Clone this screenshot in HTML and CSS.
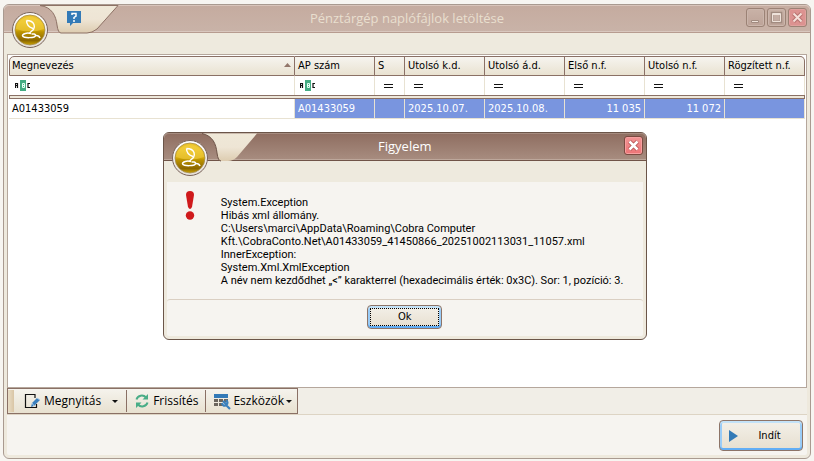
FILE: index.html
```html
<!DOCTYPE html>
<html lang="hu">
<head>
<meta charset="utf-8">
<title>Pénztárgép naplófájlok letöltése</title>
<link rel="stylesheet" href="styles.css">
</head>
<body>
<svg class="defs" aria-hidden="true">
  <defs>
    <linearGradient id="gold" x2="0" y2="1"><stop offset="0" stop-color="#edc52d"/><stop offset=".25" stop-color="#e8c020"/><stop offset=".5" stop-color="#d5a90a"/><stop offset=".56" stop-color="#bd9400"/><stop offset=".85" stop-color="#8c6700"/><stop offset="1" stop-color="#cda500"/></linearGradient>
    <linearGradient id="cream" x2="0" y2="1"><stop offset="0" stop-color="#efe8d8"/><stop offset=".5" stop-color="#eee5d5"/><stop offset="1" stop-color="#ddccb0"/></linearGradient>
    <linearGradient id="rim" x2="0" y2="1"><stop offset="0" stop-color="#fff"/><stop offset="1" stop-color="#e5dfd8"/></linearGradient>
    <symbol id="badge" viewBox="0 0 38 38">
      <circle cx="19" cy="19" r="17.500" fill="url(#rim)" stroke="#796359"/>
      <circle cx="19" cy="19" r="15" fill="url(#gold)" stroke="#a58d50" stroke-width=".8"/>
      <path d="M5 18a14 12 0 0 1 28 0q-14 5-28 0" fill="#f5d34c" opacity=".5"/>
      <path d="M15.500 9.500q6 0 7.500 4 1 3-.5 5L18.500 22M15.500 9.500q0 6 6.500 8" fill="none" stroke="#fff" stroke-width="1.400"/>
      <path d="M20 22.500c-4-1-8.500 0-8.500 2.200 0 2.600 13 2.600 13-.2 0-1.500-2-1.800-4-1.500M24 24.500q4-.5 5 2.500" fill="none" stroke="#fff" stroke-width="1.500"/>
    </symbol>
    <symbol id="abc" viewBox="0 0 16 11">
      <path d="M5 0h6v11H5z" fill="#44ab82"/>
      <path d="M.5 8V3.500h2V8M.5 5.500h2M15 3.500h-2v4h2" fill="none" stroke="#111" stroke-width="1.200"/>
      <path d="M7.500 3.500h2v4h-2zM7.500 5.500h2" fill="none" stroke="#e4fff3"/>
    </symbol>
  </defs>
</svg>
<main class="window">
  <header class="titlebar">
    <svg class="tab" width="118" height="29" viewBox="0 0 118 29" aria-hidden="true"><path d="M36 .5C48 2 52 11 53 20q1 8 4 8h26q5 0 10-4L114 .5z" fill="url(#cream)" stroke="#8d7165"/></svg>
    <svg class="badge" width="38" height="38" aria-hidden="true"><use href="#badge"/></svg>
    <button class="help" aria-label="Súgó"><svg width="14" height="15" viewBox="0 0 14 15"><path d="M0 0h14v12H6l-3 3v-3H0z" fill="#337ab7"/><path d="M5 4V2.500h4V5L7 6.500V8M7 9v2" fill="none" stroke="#fff" stroke-width="1.5"/></svg></button>
    <h1>Pénztárgép naplófájlok letöltése</h1>
    <div class="controls">
      <button aria-label="Kis méret"><svg width="17" height="17" viewBox="0 0 17 17"><path d="M4.500 11.500h7v2h-7z" fill="#eee2da" stroke="#a18b80"/></svg></button>
      <button aria-label="Teljes méret"><svg width="17" height="17" viewBox="0 0 17 17"><path d="M4 4h9v9H4z" fill="#c5aea4" stroke="#a18b80" stroke-width="2.500"/><path d="M4.500 4.500h8v8h-8zM4 5.500h9" fill="none" stroke="#eee2da"/></svg></button>
      <button class="close" aria-label="Bezárás"><svg width="17" height="17" viewBox="0 0 17 17"><path d="M4.500 4.500l8 8m0-8l-8 8" stroke="#b87370" stroke-width="4"/><path d="M4.500 4.500l8 8m0-8l-8 8" stroke="#f5dfd9" stroke-width="2"/></svg></button>
    </div>
  </header>
  <div class="band"></div>
  <section class="grid">
    <table>
      <colgroup><col><col class="mid"><col class="small"><col class="mid"><col class="mid"><col class="mid"><col class="mid"><col class="mid"></colgroup>
      <thead>
        <tr><th><span class="sorted">Megnevezés <svg width="7" height="4" viewBox="0 0 7 4" aria-hidden="true"><path d="M0 4l3.500-4L7 4z" fill="#92766a"/></svg></span></th><th>AP szám</th><th>S</th><th>Utolsó k.d.</th><th>Utolsó á.d.</th><th>Első n.f.</th><th>Utolsó n.f.</th><th>Rögzített n.f.</th></tr>
        <tr class="filter"><td><svg width="16" height="11" aria-label="ABC"><use href="#abc"/></svg></td><td><svg width="16" height="11" aria-label="ABC"><use href="#abc"/></svg></td><td><i class="equals"></i></td><td><i class="equals"></i></td><td><i class="equals"></i></td><td><i class="equals"></i></td><td><i class="equals"></i></td><td><i class="equals"></i></td></tr>
        <tr class="divider"><td colspan="8"></td></tr>
      </thead>
      <tbody>
        <tr><td>A01433059</td><td>A01433059</td><td></td><td>2025.10.07.</td><td>2025.10.08.</td><td class="number">11 035</td><td class="number">11 072</td><td></td></tr>
      </tbody>
    </table>
  </section>
  <div class="toolrow">
    <div class="toolbar">
      <span class="grip"></span>
      <button class="open"><svg width="16" height="16" viewBox="0 0 16 16"><path d="M11 5V1.500H1.500v13h11V11" fill="none" stroke="#111" stroke-width="1.2"/><path d="M13 5l3 2-6 6-3 1 1-4z" fill="#3a7fbd"/><path d="M13 5l3 2M8 10l2 3" stroke="#a9cbe8"/></svg><span>Megnyitás</span><i class="arrow"></i></button>
      <button class="refresh"><svg width="14" height="14" viewBox="0 0 14 14"><path d="M1.500 5.500A5.500 5.500 0 0 1 11 3.500M12.500 8.500A5.500 5.500 0 0 1 3 10.500" fill="none" stroke="#49ad87" stroke-width="2"/><path d="M13 0v5.500H7.500zM1 14V8.500h5.500z" fill="#49ad87"/></svg><span>Frissítés</span></button>
      <button class="tools"><svg width="17" height="17" viewBox="0 0 17 17"><path d="M0 1h14v4H0z" fill="#337ab7"/><path d="M0 6h4v3H0zM5 6h4v3H5zM0 10h4v3H0zM5 10h4v3H5zM10 6h4v3h-4z" fill="#6b655d"/><path d="M9 8l3 3m-4-1q1 4 4 2 3-2 0-5M12 12l4 4" fill="none" stroke="#3b81bd" stroke-width="2.200"/></svg><span>Eszközök</span><i class="arrow"></i></button>
    </div>
  </div>
  <footer>
    <button class="action start"><svg width="9" height="12" viewBox="0 0 9 12" aria-hidden="true"><path d="M0 0l9 6-9 6z" fill="#337ab7"/></svg><span>Indít</span></button>
  </footer>
</main>
<dialog open aria-labelledby="notice">
  <header class="titlebar">
    <svg class="tab" width="118" height="29" viewBox="0 0 118 29" aria-hidden="true"><path d="M38 .5C49 3 52 11 53 20q1 8 4 8h7q5 0 9-4L93 .5z" fill="url(#cream)"/><path d="M38 .5C49 3 52 11 53 20q1 8 4 8" fill="none" stroke="#6c5247"/></svg>
    <svg class="badge" width="38" height="38" aria-hidden="true"><use href="#badge"/></svg>
    <h2 id="notice">Figyelem</h2>
    <div class="controls"><button class="close" aria-label="Bezárás"><svg width="17" height="17" viewBox="0 0 17 17"><path d="M4.500 4.500l8 8m0-8l-8 8" stroke="#ad4d4b" stroke-width="4"/><path d="M4.500 4.500l8 8m0-8l-8 8" stroke="#fff" stroke-width="2.500"/></svg></button></div>
  </header>
  <div class="band"></div>
  <div class="message">
    <svg width="10" height="29" viewBox="0 0 10 29" aria-hidden="true"><path d="M1 4q0-4 4-4t4 4L7 16q-2 4-4 0z" fill="#cf1a1c"/><circle cx="5" cy="24.500" r="4.200" fill="#cf1a1c"/></svg>
    <p>System.Exception<br>Hibás xml állomány.<br>C:\Users\marci\AppData\Roaming\Cobra Computer<br>Kft.\CobraConto.Net\A01433059_41450866_20251002113031_11057.xml<br>InnerException:<br>System.Xml.XmlException<br>A név nem kezdődhet „&lt;” karakterrel (hexadecimális érték: 0x3C). Sor: 1, pozíció: 3.</p>
  </div>
  <div class="answers"><button class="action ok"><span>Ok</span></button></div>
</dialog>
</body>
</html>
```
FILE: styles.css
```css
* { box-sizing: border-box; }
body {
  margin: 0;
  min-height: 100vh;
  padding: 4px 3px 2px;
  display: flex;
  background: #f7f5f1;
  color: #000;
  font: 11px/13px "DejaVu Sans Condensed", "Noto Sans", sans-serif;
}
button { font: inherit; color: inherit; margin: 0; padding: 0; border: 0; background: none; }
svg { display: block; flex: none; }
.defs { position: absolute; width: 0; height: 0; }
.window {
  flex: 1;
  display: flex;
  flex-direction: column;
  border: 1px solid #a99a90;
  border-radius: 6px;
  background: #f6f4f0;
  box-shadow: inset 0 0 0 3px #eee9dd;
}
.titlebar {
  position: relative;
  height: 28px;
  display: flex;
  align-items: center;
  justify-content: center;
  border-bottom: 1px solid #b79c90;
  border-radius: 5px 5px 0 0;
  background: linear-gradient(#c5ab9f, #c9b3a8);
  box-shadow: inset 0 1px #d9c5bb, inset 0 -1px #d9c8bf;
}
.tab { position: absolute; left: 0; top: 0; }
.badge { position: absolute; left: 7px; top: 6px; }
.help { position: absolute; left: 63px; top: 6px; }
h1, h2 { margin: 0 0 2px; font: 13px/18px "Open Sans", sans-serif; color: #e9dfcf; }
.controls { position: absolute; right: 3px; top: 3px; display: flex; gap: 2px; }
.controls button {
  width: 19px;
  height: 19px;
  border: 1px solid #9b8275;
  border-radius: 3px;
  background: linear-gradient(#c9b2a7, #bda398);
  box-shadow: inset 0 0 0 1px #cbb6ac;
}
.controls .close { background: #dc9290; box-shadow: inset 0 0 0 1px #e0a19e; }
.band { height: 21px; background: #eeeade; }
.grid {
  flex: 1;
  margin: 0 3px;
  padding: 1px;
  border: 1px solid #b5a79c;
  background: #fff;
}
table { width: 100%; table-layout: fixed; border-collapse: separate; border-spacing: 0; }
.mid { width: 80px; }
.small { width: 30px; }
th, td { padding: 0 3px; text-align: left; font-weight: normal; white-space: nowrap; }
th {
  height: 20px;
  padding: 0 3px 2px;
  border: solid #8a7065;
  border-width: 1px 1px 1px 0;
  background: linear-gradient(#f6f4ef, #e9e2d1);
}
th:first-child { padding-left: 2px; border-left-width: 1px; border-top-left-radius: 5px; }
th:last-child { border-top-right-radius: 5px; }
.sorted { display: flex; align-items: center; justify-content: space-between; }
.filter td { height: 19px; padding: 0 6px; border-right: 1px solid #e8e2d2; }
.filter td + td { padding-left: 5px; }
.filter td + td + td { padding-left: 9px; }
.equals { display: block; width: 9px; height: 4px; border: solid #111; border-width: 1px 0; }
.divider td { height: 4px; padding: 0; border: 1px solid #8a7065; background: #eee8db; line-height: 0; }
tbody td { height: 20px; border-right: 1px solid #e8e2d2; border-bottom: 1px solid #e8e2d2; }
tbody td + td { background: #7995df; color: #fff; }
tbody .number { text-align: right; }
.toolrow {
  display: flex;
  margin: 0 3px;
  border-bottom: 1px solid #ddd4c4;
  background: #f1eee7;
}
.toolbar {
  height: 26px;
  display: flex;
  padding: 1px 0;
  border: 1px solid #8a7065;
  background: linear-gradient(#f5f3ed, #e8e1d0);
  font: 12px/16px "Open Sans", sans-serif;
}
.grip { width: 6px; background: linear-gradient(90deg, #e9ddc6, #d9c5a5); }
.toolbar button { display: flex; align-items: center; padding: 0 8px; gap: 4px; border-right: 1px solid #8a7065; }
.toolbar .open { padding-left: 10px; }
.toolbar .open .arrow { margin-left: 7px; }
.toolbar .refresh { padding-right: 7px; }
.toolbar .tools { border: 0; padding-right: 5px; gap: 2px; }
.arrow { border: solid transparent; border-top-color: #111; border-width: 3px 3px 0; }
footer { display: flex; justify-content: flex-end; padding: 5px 7px 7px; }
.action {
  display: flex;
  align-items: center;
  justify-content: center;
  border: 1px solid #8d7468;
  border-radius: 4px;
  background: linear-gradient(#f3f0e9, #e7dfcf);
  box-shadow: inset 0 -2px #62aef5, inset 0 2px #c3e2f8, inset 0 0 0 2px #9accf7;
}
.start { width: 84px; height: 31px; gap: 20px; padding-right: 12px; }
dialog {
  position: absolute;
  left: 20%;
  right: auto;
  top: 132px;
  width: 484px;
  margin: 0;
  padding: 0;
  color: #000;
  border: 1px solid #6b5549;
  border-radius: 6px;
  background: #f6f4f0;
  box-shadow: inset 0 0 0 3px #eee9dd;
}
dialog .titlebar {
  border-color: #705448;
  background: linear-gradient(#8e6d60, #a88d80);
  box-shadow: inset 0 1px #a58b7f, inset 0 -1px #bda79b;
}
dialog h2 { color: #fff; }
dialog .controls .close { border-color: #7b4a41; background: linear-gradient(#f19494, #ed7476); box-shadow: inset 0 0 0 1px #f6a0a0; }
dialog .band { height: 21px; }
.message { display: flex; gap: 26px; padding: 9px 16px 12px 21px; font-family: Roboto, sans-serif; }
.message p { margin: 5px 0 0; white-space: nowrap; }
.answers { display: flex; justify-content: center; margin: 0 3px; padding: 5px 0 10px; border-top: 1px solid #dacfc2; border-radius: 3px; }
.ok { width: 75px; height: 24px; padding: 2px; }
.ok span { width: 100%; height: 100%; border: 1px dotted #000; line-height: 16px; }
```
